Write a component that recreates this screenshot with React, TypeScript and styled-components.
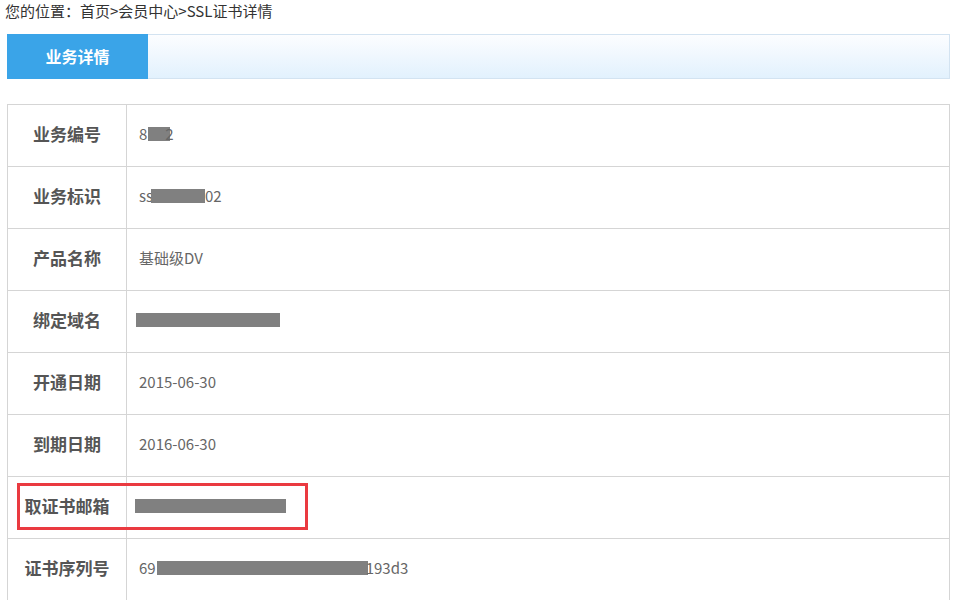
import styled, { createGlobalStyle } from 'styled-components';

const GlobalStyle = createGlobalStyle`
  body {
    margin: 0;
    background: #fff;
    font-family: "Noto Sans CJK SC", "Liberation Sans", sans-serif;
  }
`;

const Page = styled.div`
  padding: 0 3px 0 5px;
  display: flex;
  flex-direction: column;
`;

const Breadcrumb = styled.div`
  height: 24px;
  line-height: 22px;
  font-size: 15px;
  color: #333;
`;

const Panel = styled.div`
  margin-left: 2px;
  width: 943px;
`;

const TabBar = styled.div`
  margin-top: 10px;
  height: 43px;
  display: flex;
  border: 1px solid #d3e3f1;
  border-left: none;
  background: linear-gradient(to bottom, #fcfdff, #e2f1fd);
`;

const Tab = styled.div<{ $active?: boolean }>`
  width: 141px;
  margin-top: -1px;
  height: 45px;
  padding-bottom: 2px;
  box-sizing: border-box;
  display: flex;
  align-items: center;
  justify-content: center;
  font-size: 16px;
  font-weight: bold;
  color: ${(p) => (p.$active ? '#fff' : '#333')};
  background: ${(p) => (p.$active ? '#3aa4e8' : 'transparent')};
`;

const Table = styled.div`
  margin-top: 25px;
  border: 1px solid #d5d5d5;
  border-bottom: none;
`;

const Row = styled.div`
  position: relative;
  display: grid;
  grid-template-columns: 119px 1fr;
  height: 61px;
  border-bottom: 1px solid #d5d5d5;
`;

const Label = styled.div`
  display: flex;
  align-items: center;
  justify-content: center;
  padding-bottom: 4px;
  border-right: 1px solid #d5d5d5;
  font-size: 17px;
  font-weight: bold;
  color: #555;
`;

const Value = styled.div`
  display: flex;
  align-items: center;
  padding: 0 0 4px 12px;
  font-size: 15px;
  color: #666;
  white-space: pre;
`;

const Redact = styled.span<{ $w: number; $shift?: number }>`
  display: inline-block;
  width: ${(p) => p.$w}px;
  height: 14px;
  background: #808080;
  margin-left: ${(p) => p.$shift ?? 0}px;
`;

const Highlight = styled.div`
  position: absolute;
  left: 9px;
  top: 6px;
  width: 285px;
  height: 41px;
  border: 3px solid #ea3a40;
  pointer-events: none;
`;

type Item = {
  label: string;
  value: React.ReactNode;
  marked?: boolean;
};

const items: Item[] = [
  {
    label: '业务编号',
    value: (
      <>
        8<Redact $w={22} $shift={1} />
        <span style={{ marginLeft: -5 }}>2</span>
      </>
    ),
  },
  {
    label: '业务标识',
    value: (
      <>
        ss<Redact $w={54} $shift={-2} />02
      </>
    ),
  },
  { label: '产品名称', value: '基础级DV' },
  { label: '绑定域名', value: <Redact $w={144} $shift={-3} /> },
  { label: '开通日期', value: '2015-06-30' },
  { label: '到期日期', value: '2016-06-30' },
  { label: '取证书邮箱', value: <Redact $w={151} $shift={-4} />, marked: true },
  {
    label: '证书序列号',
    value: (
      <>
        69<Redact $w={211} $shift={1} />
        <span style={{ marginLeft: -2 }}>193d3</span>
      </>
    ),
  },
];

const App = () => {
  return (
    <>
      <GlobalStyle />
      <Page>
        <Breadcrumb>您的位置：首页&gt;会员中心&gt;SSL证书详情</Breadcrumb>
        <Panel>
          <TabBar>
            <Tab $active>业务详情</Tab>
          </TabBar>
          <Table>
            {items.map((it) => (
              <Row key={it.label}>
                <Label>{it.label}</Label>
                <Value>{it.value}</Value>
                {it.marked && <Highlight />}
              </Row>
            ))}
          </Table>
        </Panel>
      </Page>
    </>
  );
};

export default App;
